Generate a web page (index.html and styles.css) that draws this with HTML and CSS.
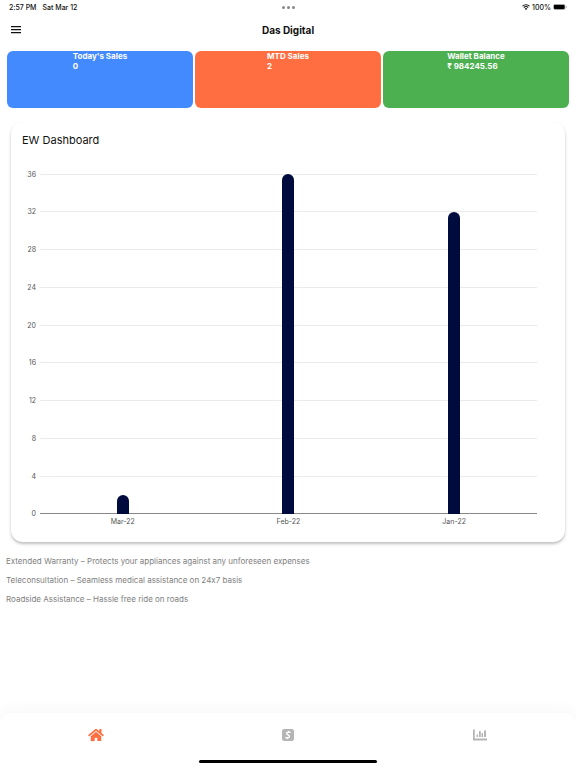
FILE: index.html
```html
<!DOCTYPE html>
<html lang="en">
<head>
  <meta charset="UTF-8" />
  <meta name="viewport" content="width=device-width, initial-scale=1" />
  <title>Das Digital</title>
  <link rel="stylesheet" href="styles.css">
</head>
<body>

  <div class="status-bar">
    <div class="status-left">
      <span>2:57 PM</span>
      <span>Sat Mar 12</span>
    </div>
    <div class="dots"><i></i><i></i><i></i></div>
    <div class="status-right">
      <svg width="8" height="6" viewBox="0 0 16 12" fill="none" stroke="#111" stroke-width="2.2">
        <path d="M1 4.4a10 10 0 0 1 14 0M3.6 7.2a6.3 6.3 0 0 1 8.8 0" />
        <path d="M8 12 5.4 9.3a3.8 3.8 0 0 1 5.2 0z" fill="#111" stroke="none" />
      </svg>
      <span>100%</span>
      <svg width="14" height="6" viewBox="0 0 28 12">
        <rect x="0.5" y="0.5" width="24" height="11" rx="3.4" fill="none" stroke="#999" />
        <rect x="1.6" y="1.6" width="21.8" height="8.8" rx="2.2" fill="#000" />
        <path d="M26 4v4c1-.4 1.500-1 1.500-2S27 4.400 26 4z" fill="#999" />
      </svg>
    </div>
  </div>

  <header class="app-bar">
    <button class="menu-button" type="button" aria-label="Menu">
      <svg width="10" height="8" viewBox="0 0 10 8" fill="#111">
        <path d="M0 0h10v1.300H0zM0 3h10v1.300H0zM0 6h10v1.300H0z" />
      </svg>
    </button>
    <h1>Das Digital</h1>
  </header>

  <main>
    <section class="tiles">
      <div class="tile blue">
        <p>Today's Sales<br>0</p>
      </div>
      <div class="tile orange">
        <p>MTD Sales<br>2</p>
      </div>
      <div class="tile green">
        <p>Wallet Balance<br>₹ 984245.56</p>
      </div>
    </section>

    <section class="card">
      <h2>EW Dashboard</h2>
      <div class="chart">
        <ul class="scale">
          <li>36</li>
          <li>32</li>
          <li>28</li>
          <li>24</li>
          <li>20</li>
          <li>16</li>
          <li>12</li>
          <li>8</li>
          <li>4</li>
          <li>0</li>
        </ul>
        <div class="bars">
          <div class="bar" style="height: 5.56%"></div>
          <div class="bar" style="height: 100%"></div>
          <div class="bar" style="height: 88.89%"></div>
        </div>
      </div>
      <div class="months">
        <span>Mar-22</span>
        <span>Feb-22</span>
        <span>Jan-22</span>
      </div>
    </section>

    <section class="notes">
      <p>Extended Warranty – Protects your appliances against any unforeseen expenses</p>
      <p>Teleconsultation – Seamless medical assistance on 24x7 basis</p>
      <p>Roadside Assistance – Hassle free ride on roads</p>
    </section>
  </main>

  <nav class="tab-bar">
    <div class="tabs">
      <a href="#home" class="active" aria-label="Home">
        <svg width="16" height="14" viewBox="0 0 576 512" fill="currentColor">
          <path d="M280.400 148.300 96 300.100V464a16 16 0 0 0 16 16l112-.3a16 16 0 0 0 16-16V368a16 16 0 0 1 16-16h64a16 16 0 0 1 16 16v95.600a16 16 0 0 0 16 16l112 .3a16 16 0 0 0 16-16V300L295.700 148.300a12.200 12.200 0 0 0-15.300 0zM571.600 251.500 488 182.600V44a12 12 0 0 0-12-12h-56a12 12 0 0 0-12 12v72.600L318.500 43a48 48 0 0 0-61 0L4.300 251.500a12 12 0 0 0-1.600 16.900l25.500 31a12 12 0 0 0 16.900 1.600l235.200-193.700a12.200 12.200 0 0 1 15.300 0L530.900 301a12 12 0 0 0 16.900-1.600l25.500-31a12 12 0 0 0-1.700-16.900z" />
        </svg>
      </a>
      <a href="#sales" aria-label="Sales">
        <svg width="12" height="12" viewBox="0 0 24 24">
          <rect width="24" height="24" rx="4.500" fill="currentColor" />
          <path d="M17 6.500h-4.500c-2 0-3.300 1-3.300 2.600 0 3 5.800 2.600 5.800 5.600 0 1.700-1.200 2.800-3.200 2.800H7M13.200 4l-.5 2.500M11.500 17.500 11 20" fill="none" stroke="#fff" stroke-width="2.600" />
        </svg>
      </a>
      <a href="#reports" aria-label="Reports">
        <svg width="14" height="12" viewBox="0 0 28 24" fill="currentColor">
          <path d="M0 1h3.500v18H28v4H0zM7 11h3v5H7zM12 4h3.500v12H12zM17 8h3v8h-3zM22 3h4v13h-4z" />
        </svg>
      </a>
    </div>
    <div class="home-indicator"></div>
  </nav>

</body>
</html>
```

FILE: styles.css
```css
* {
  box-sizing: border-box;
  margin: 0;
  padding: 0;
}

body {
  min-height: 100vh;
  display: flex;
  flex-direction: column;
  font-family: Inter, "Noto Sans", sans-serif;
  font-size: 7px;
  font-feature-settings: "calt" 0;
  color: #111;
  background: #fff;
}

.status-bar {
  display: grid;
  grid-template-columns: 1fr auto 1fr;
  align-items: center;
  height: 14px;
  padding: 0 9px;
  font-weight: 500;
}

.status-left,
.status-right {
  display: flex;
  align-items: center;
  gap: 6px;
}

.status-right {
  justify-content: flex-end;
  gap: 2px;
}

.dots {
  display: flex;
  gap: 2px;
}

.dots i {
  width: 3px;
  height: 3px;
  border-radius: 50%;
  background: #888;
}

.app-bar {
  display: grid;
  grid-template-columns: 1fr auto 1fr;
  align-items: center;
  height: 32px;
  padding: 0 11px;
}

.menu-button {
  display: flex;
  justify-self: start;
  border: none;
  background: none;
  cursor: pointer;
}

h1 {
  font-size: 10px;
  font-weight: 700;
}

.tiles {
  display: grid;
  grid-template-columns: repeat(3, 1fr);
  gap: 2px;
  padding: 5px 7px 0;
}

.tile {
  display: flex;
  justify-content: center;
  min-height: 57px;
  border-radius: 6px;
  color: #fff;
  font-size: 8px;
  font-weight: 700;
  line-height: 10px;
}

.blue {
  background: #448aff;
}

.orange {
  background: #ff6e40;
}

.green {
  background: #4caf50;
}

.card {
  margin: 14px 11px 0;
  padding: 11px;
  border-radius: 12px;
  background: #fff;
  box-shadow: 0 2px 3px rgba(0, 0, 0, 0.25);
}

h2 {
  font-size: 11px;
  font-weight: 400;
  line-height: 15px;
}

/* the first and last grid lines sit 5px inside the scale */
.chart {
  position: relative;
  height: 350px;
  margin: 21px 17px 0 0;
}

.scale {
  display: flex;
  flex-direction: column;
  justify-content: space-between;
  height: 100%;
  list-style: none;
  color: #555;
}

.scale li {
  display: grid;
  grid-template-columns: 14px 1fr;
  align-items: center;
  gap: 4px;
  height: 10px;
  text-align: right;
}

.scale li::after {
  content: "";
  height: 1px;
  background: #ebebeb;
}

.scale li:last-child::after {
  background: #888;
}

.bars {
  position: absolute;
  inset: 5px 0 5px 18px;
  display: grid;
  grid-template-columns: repeat(3, 1fr);
  align-items: end;
  justify-items: center;
}

.bar {
  width: 12px;
  border-radius: 6px 6px 0 0;
  background: #000b3d;
}

.months {
  display: grid;
  grid-template-columns: repeat(3, 1fr);
  margin: 0 17px 0 18px;
  padding-bottom: 6px;
  line-height: 6px;
  text-align: center;
  color: #555;
}

.notes {
  display: grid;
  gap: 9px;
  padding: 14px 6px;
  font-size: 8px;
  line-height: 10px;
  color: #808080;
}

.tab-bar {
  margin-top: auto;
  padding-bottom: 5px;
  border-radius: 12px 12px 0 0;
  background: #fff;
  box-shadow: 0 -4px 16px rgba(0, 0, 0, 0.03);
}

.tabs {
  display: grid;
  grid-template-columns: repeat(3, 1fr);
}

.tabs a {
  display: flex;
  align-items: center;
  justify-content: center;
  height: 44px;
  color: #b5b5b5;
}

.tabs .active {
  color: #ff6e40;
}

.home-indicator {
  width: 31%;
  height: 3px;
  margin: 3px auto 0;
  border-radius: 2px;
  background: #000;
}
```
